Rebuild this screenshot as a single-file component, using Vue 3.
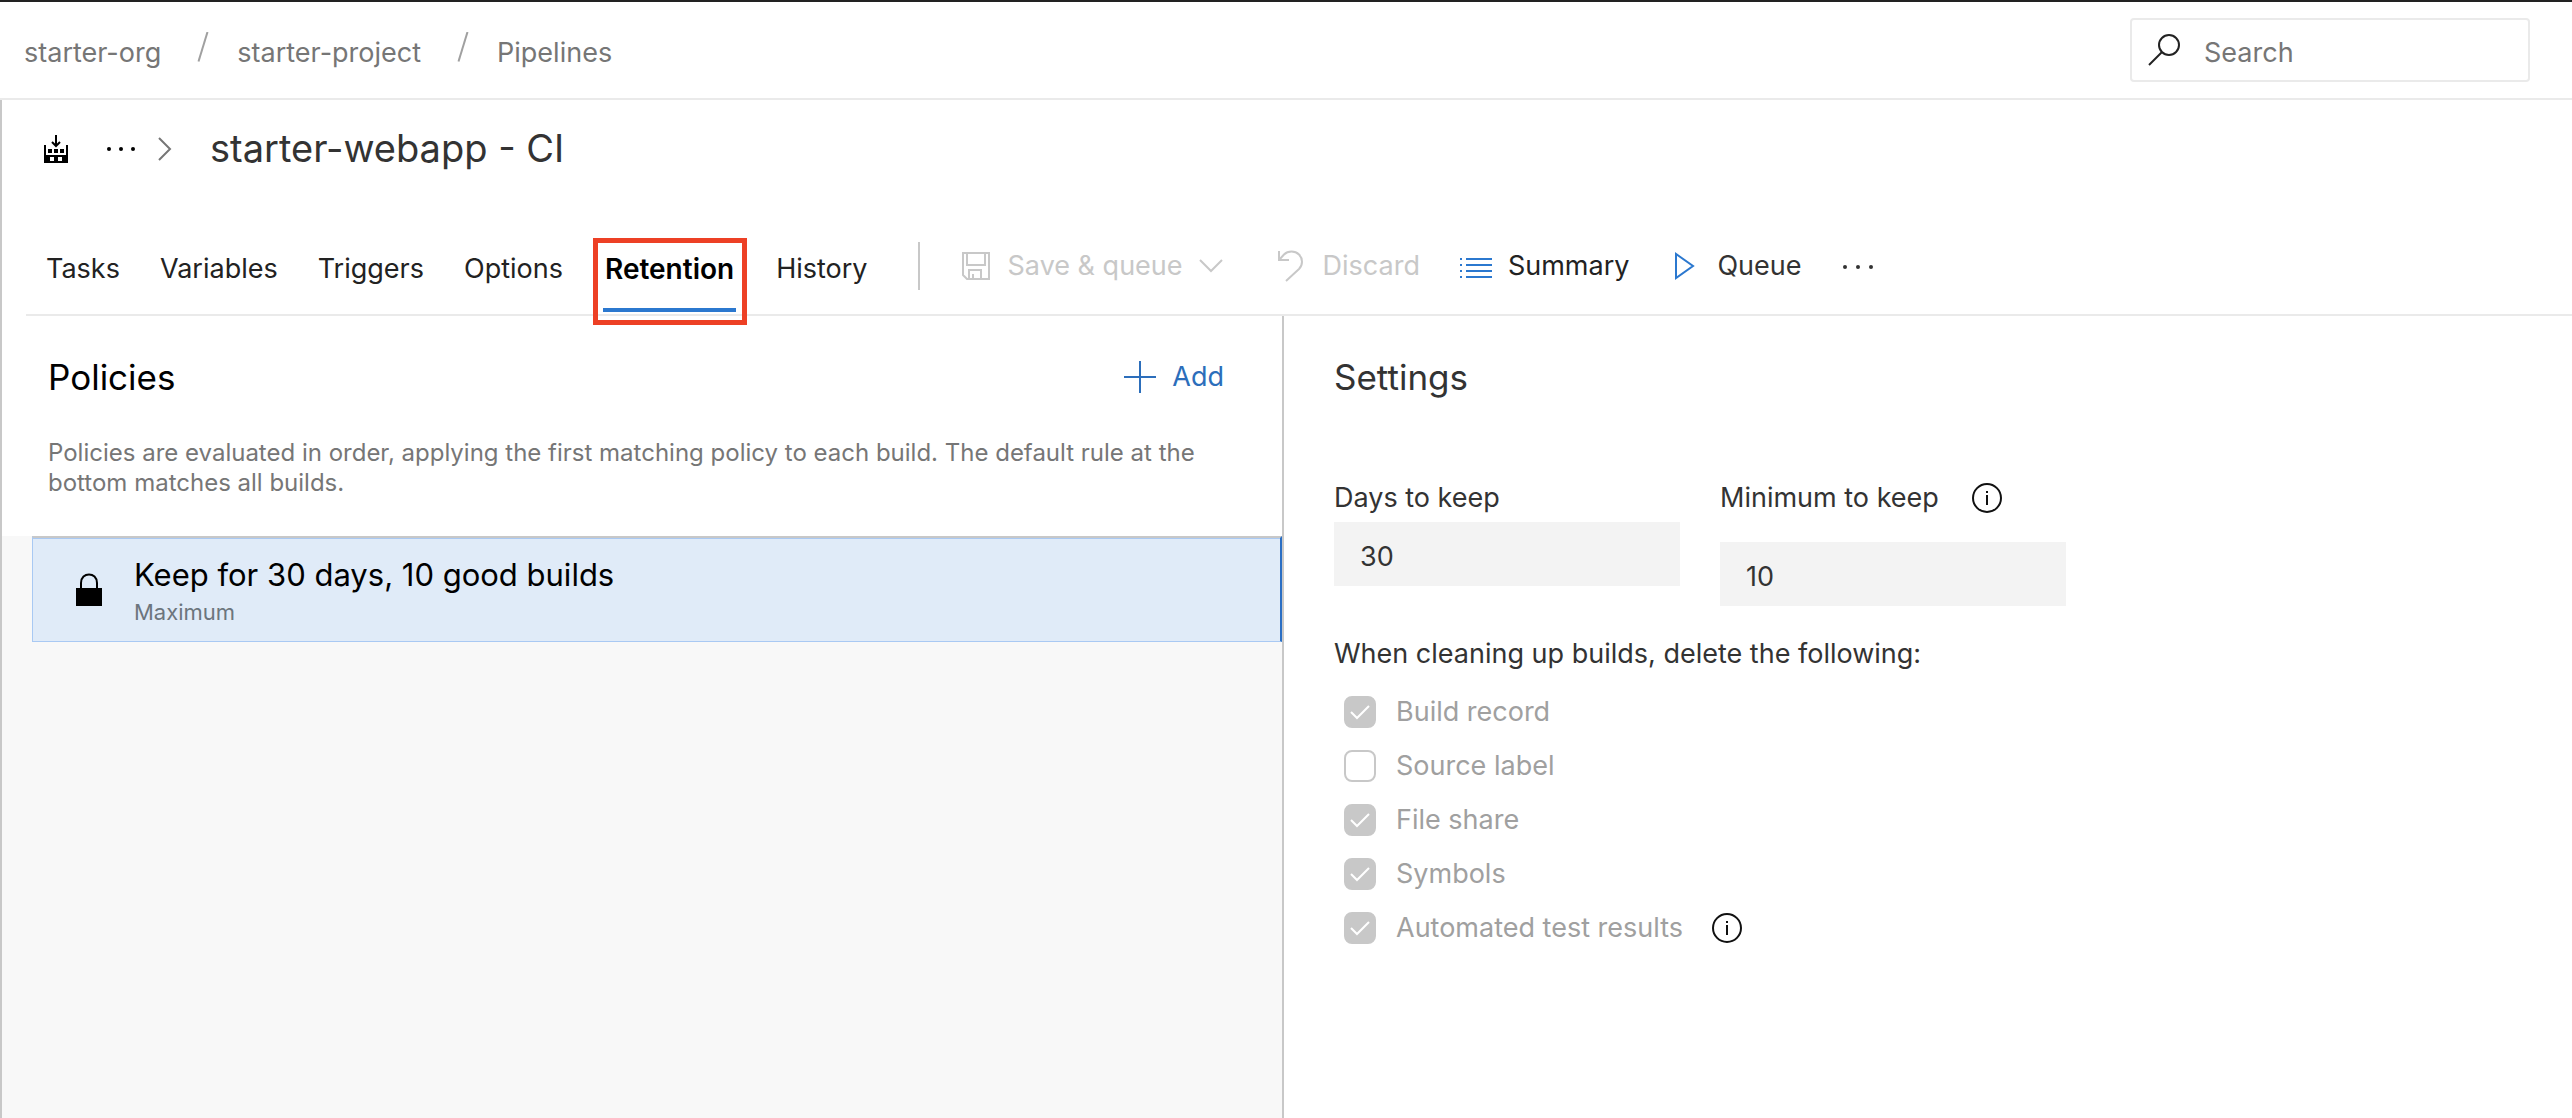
<script setup>
import { ref } from 'vue'

const crumbs = ['starter-org', 'starter-project', 'Pipelines']
const tabs = ['Tasks', 'Variables', 'Triggers', 'Options', 'Retention', 'History']
const activeTab = 'Retention'

const days = ref('30')
const minimum = ref('10')

const cleanup = [
  { id: 'build-record', label: 'Build record', checked: true },
  { id: 'source-label', label: 'Source label', checked: false },
  { id: 'file-share', label: 'File share', checked: true },
  { id: 'symbols', label: 'Symbols', checked: true },
  { id: 'test-results', label: 'Automated test results', checked: true, info: true }
]
</script>

<template>
  <div class="page">
    <header class="topbar">
      <nav class="crumbs" aria-label="Breadcrumb">
        <template v-for="(crumb, i) in crumbs" :key="crumb">
          <svg v-if="i > 0" class="slash" viewBox="0 0 12 30" aria-hidden="true">
            <path d="M10.500 0L1.500 29.500" />
          </svg>
          <a href="#">{{ crumb }}</a>
        </template>
      </nav>
      <label class="search">
        <svg class="icon" viewBox="0 0 32 32" aria-hidden="true">
          <circle cx="21" cy="11" r="10" />
          <path d="M14 18L1 31" />
        </svg>
        <input type="text" placeholder="Search" aria-label="Search" />
      </label>
    </header>

    <main class="main">
      <div class="title-row">
        <svg class="build-icon" viewBox="0 0 24 28" aria-hidden="true">
          <path fill-rule="evenodd" d="M0 10h2v10h20V10h2v18H0zM6 22v4h4v-4zM14 22v4h4v-4z" />
          <path d="M4 14h4v4H4zM10 14h4v4h-4zM16 14h4v4h-4z" />
          <path class="build-arrow" d="M12 0v11M8 7l4 4l4-4" />
        </svg>
        <button class="dots-button" aria-label="More">
          <svg class="dots-small" viewBox="0 0 30 4" aria-hidden="true">
            <circle cx="3" cy="2" r="2" /><circle cx="15" cy="2" r="2" /><circle cx="27" cy="2" r="2" />
          </svg>
        </button>
        <svg class="chevron-right" viewBox="0 0 14 24" aria-hidden="true">
          <path d="M1 1L12 12L1 23" />
        </svg>
        <h1>starter-webapp - CI</h1>
      </div>

      <div class="tab-row">
        <nav class="tabs">
          <a
            v-for="tab in tabs"
            :key="tab"
            href="#"
            class="tab"
            :class="{ active: tab === activeTab }"
          >{{ tab }}<span v-if="tab === activeTab" class="callout"></span></a>
        </nav>
        <div class="toolbar">
          <span class="separator"></span>
          <button class="tool save" disabled>
            <svg class="icon" viewBox="0 0 32 32" aria-hidden="true">
              <path d="M3 3h26v26H7l-4-4zM7 3v12h18V3M9 29v-9h12v9M13 29v-5" />
            </svg>
            Save &amp; queue
            <svg class="chevron-down" viewBox="0 0 24 14" aria-hidden="true">
              <path d="M1 1L12 12L23 1" />
            </svg>
          </button>
          <button class="tool" disabled>
            <svg class="icon" viewBox="0 0 32 32" aria-hidden="true">
              <path d="M4 1v9h10M4 10L9 4.500C13 0.500 20 0.500 24 4.500C28 8.500 28 15 24 19L11 31" />
            </svg>
            Discard
          </button>
          <button class="tool">
            <svg class="icon blue-fill" viewBox="0 0 32 32" aria-hidden="true">
              <path d="M0 8h2v2H0zM6 8h26v2H6zM0 14h2v2H0zM6 14h26v2H6zM0 20h2v2H0zM6 20h26v2H6zM0 26h2v2H0zM6 26h26v2H6z" />
            </svg>
            Summary
          </button>
          <button class="tool queue">
            <svg class="icon blue" viewBox="0 0 32 32" aria-hidden="true">
              <path d="M7 4v24L24 16z" />
            </svg>
            Queue
          </button>
          <button class="tool" aria-label="More actions">
            <svg class="dots" viewBox="0 0 32 6" aria-hidden="true">
              <circle cx="3" cy="4" r="2" /><circle cx="16" cy="4" r="2" /><circle cx="29" cy="4" r="2" />
            </svg>
          </button>
        </div>
      </div>

      <div class="panes">
        <section class="policies">
          <div class="policies-head">
            <div class="heading-row">
              <h2>Policies</h2>
              <button class="add">
                <svg class="icon" viewBox="0 0 32 32" aria-hidden="true">
                  <path d="M0 16h32M16 0v32" />
                </svg>
                Add
              </button>
            </div>
            <p>Policies are evaluated in order, applying the first matching policy to each build. The default rule at the bottom matches all builds.</p>
          </div>
          <div class="policy-list">
            <a href="#" class="policy">
              <svg class="lock" viewBox="0 0 26 34" aria-hidden="true">
                <path class="lock-body" d="M0 15h26v18H0z" />
                <path class="lock-arch" d="M5 16V10C5 -1.500 21 -1.500 21 10V16" />
              </svg>
              <span class="policy-text">
                <span class="policy-name">Keep for 30 days, 10 good builds</span>
                <span class="policy-kind">Maximum</span>
              </span>
            </a>
          </div>
        </section>

        <section class="settings">
          <h2>Settings</h2>
          <div class="fields">
            <div class="field">
              <div class="field-label"><label for="days">Days to keep</label></div>
              <input id="days" v-model="days" type="text" disabled />
            </div>
            <div class="field with-info">
              <div class="field-label">
                <label for="minimum">Minimum to keep</label>
                <svg class="info" viewBox="0 0 32 32" aria-hidden="true">
                  <circle cx="16" cy="16" r="14" /><path d="M16 13v10M16 9v2" />
                </svg>
              </div>
              <input id="minimum" v-model="minimum" type="text" disabled />
            </div>
          </div>
          <fieldset class="cleanup">
            <legend>When cleaning up builds, delete the following:</legend>
            <div v-for="item in cleanup" :key="item.id" class="option">
              <span class="check">
                <input :id="item.id" type="checkbox" :checked="item.checked" disabled />
                <svg v-if="item.checked" viewBox="0 0 32 32" aria-hidden="true">
                  <path d="M7 16L13 22L25 10" />
                </svg>
              </span>
              <label :for="item.id">{{ item.label }}</label>
              <svg v-if="item.info" class="info" viewBox="0 0 32 32" aria-hidden="true">
                <circle cx="16" cy="16" r="14" /><path d="M16 13v10M16 9v2" />
              </svg>
            </div>
          </fieldset>
        </section>
      </div>
    </main>
  </div>
</template>

<style>
body {
  margin: 0;
}
</style>

<style scoped>
.page {
  display: flex;
  flex-direction: column;
  min-height: 100vh;
  background: #fff;
  color: #333;
  font-family: Inter, "Liberation Sans", sans-serif;
  font-size: 27px;
  line-height: 36px;
}
.page *,
.page {
  box-sizing: border-box;
}
a {
  color: inherit;
  text-decoration: none;
}
button {
  padding: 0;
  border: 0;
  background: none;
  color: inherit;
  font: inherit;
}
svg {
  flex: none;
  display: block;
  fill: none;
  stroke: currentColor;
  stroke-width: 2;
}
h1,
h2,
p {
  margin: 0;
  font-weight: 400;
}
.icon,
.info {
  width: 32px;
  height: 32px;
}

.topbar {
  display: flex;
  align-items: center;
  justify-content: space-between;
  height: 100px;
  padding: 0 42px 0 24px;
  border-top: 2px solid #222;
  border-bottom: 2px solid #eaeaea;
}
.crumbs {
  display: flex;
  align-items: center;
  gap: 32px;
  padding-top: 6px;
  color: #767676;
}
.slash {
  width: 12px;
  height: 30px;
  margin: 0 -4px 12px 4px;
  color: #a0a0a0;
}
.search {
  display: flex;
  align-items: center;
  gap: 24px;
  width: 400px;
  height: 64px;
  padding-left: 16px;
  border: 2px solid #eaeaea;
  border-radius: 4px;
  color: #222;
}
.search input {
  flex: 1;
  min-width: 0;
  padding: 6px 0 0;
  border: 0;
  outline: 0;
  background: none;
  font: inherit;
}
.search input::placeholder {
  color: #767676;
  opacity: 1;
}

.main {
  display: flex;
  flex: 1;
  flex-direction: column;
  border-left: 2px solid #c8c8c8;
}
.title-row {
  display: flex;
  align-items: center;
  height: 122px;
  padding: 0 42px 24px;
}
.build-icon {
  width: 24px;
  height: 28px;
  fill: #000;
  stroke: none;
}
.build-arrow {
  fill: none;
  stroke: #000;
}
.dots-button {
  margin: 0 22px 0 38px;
}
.dots-small {
  width: 30px;
  height: 4px;
  fill: #000;
  stroke: none;
}
.chevron-right {
  width: 14px;
  height: 24px;
  margin-right: 38px;
  color: #767676;
}
h1 {
  padding-bottom: 2px;
  font-size: 38px;
  line-height: 48px;
}
.tab-row {
  display: flex;
  height: 94px;
  margin-left: 24px;
  border-bottom: 2px solid #eaeaea;
  color: #222;
}
.tabs {
  display: flex;
  gap: 40px;
  padding-left: 20px;
}
.tab {
  position: relative;
  display: flex;
  align-items: center;
  height: 92px;
  padding-top: 2px;
}
.tab.active {
  padding: 2px 2px 0;
  color: #000;
  font-size: 28px;
  font-weight: 600;
}
.tab.active::after {
  content: "";
  position: absolute;
  right: 0;
  bottom: 2px;
  left: 0;
  height: 4px;
  background: #2b78cf;
}
.callout {
  position: absolute;
  top: 16px;
  right: -11px;
  bottom: -11px;
  left: -10px;
  border: 5px solid #ed4025;
}
.toolbar {
  display: flex;
  align-items: center;
  gap: 40px;
  padding-bottom: 4px;
  margin-left: 50px;
}
.separator {
  width: 2px;
  height: 48px;
  background: #c8c8c8;
}
.tool {
  display: flex;
  align-items: center;
  gap: 16px;
}
.save {
  padding-right: 12px;
}
.tool:disabled {
  color: #c8c8c8;
}
.queue {
  color: #333;
}
.blue {
  color: #2b78cf;
}
.blue-fill {
  fill: #2b78cf;
  stroke: none;
}
.chevron-down {
  width: 24px;
  height: 14px;
}
.dots {
  width: 32px;
  height: 6px;
  fill: #333;
  stroke: none;
}

.panes {
  display: flex;
  flex: 1;
}
.policies {
  display: flex;
  flex: 0 0 calc(50% - 3px);
  flex-direction: column;
  border-right: 2px solid #c8c8c8;
}
.policies-head {
  padding: 35px 58px 38px 46px;
}
.heading-row {
  display: flex;
  align-items: center;
  justify-content: space-between;
}
h2 {
  font-size: 35px;
  line-height: 52px;
}
.policies h2 {
  color: #000;
}
.add {
  display: flex;
  align-items: center;
  gap: 16px;
  color: #2c6ebb;
}
.policies p {
  margin-top: 35px;
  color: #767676;
  font-size: 24px;
  line-height: 30px;
}
.policy-list {
  flex: 1;
  padding-left: 30px;
  background: #f8f8f8;
}
.policy {
  display: flex;
  align-items: center;
  gap: 32px;
  height: 106px;
  padding-left: 43px;
  border: 1px solid #a9c9f3;
  border-top: 2px solid #c8c8c8;
  border-right: 2px solid #2b6fc4;
  background: #e0ebf8;
  box-shadow: inset 0 1px #a9c9f3;
}
.lock {
  width: 26px;
  height: 34px;
}
.lock-body {
  fill: #000;
  stroke: none;
}
.lock-arch {
  stroke: #000;
}
.policy-text {
  display: flex;
  flex-direction: column;
  gap: 2px;
  padding-top: 2px;
}
.policy-name {
  color: #000;
  font-size: 31px;
  line-height: 40px;
}
.policy-kind {
  color: #6c757d;
  font-size: 22px;
  line-height: 30px;
}

.settings {
  flex: 1;
  padding: 35px 50px;
}
.fields {
  display: flex;
  align-items: flex-start;
  gap: 40px;
  margin-top: 73px;
}
.field {
  width: 346px;
}
.field-label {
  display: flex;
  align-items: center;
  gap: 32px;
  height: 46px;
  padding-bottom: 2px;
}
.with-info .field-label {
  margin-bottom: 20px;
}
.info {
  color: #111;
}
.field input {
  display: block;
  width: 100%;
  height: 64px;
  padding: 4px 26px 0;
  border: 0;
  background: #f3f3f3;
  color: #333;
  font: inherit;
}
.cleanup {
  display: flex;
  flex-direction: column;
  gap: 22px;
  margin: 30px 0 0;
  padding: 0;
  border: 0;
}
legend {
  margin-bottom: 24px;
  padding: 0;
}
.option {
  display: flex;
  align-items: center;
  height: 32px;
  padding-left: 10px;
  color: #a0a0a0;
}
.option label {
  padding: 0 28px 0 20px;
}
.check {
  position: relative;
  width: 32px;
  height: 32px;
}
.check input {
  display: block;
  width: 32px;
  height: 32px;
  margin: 0;
  border: 2px solid #c8c8c8;
  border-radius: 8px;
  appearance: none;
}
.check input:checked {
  background: #c8c8c8;
}
.check svg {
  position: absolute;
  inset: 0;
  color: #fff;
}
</style>
